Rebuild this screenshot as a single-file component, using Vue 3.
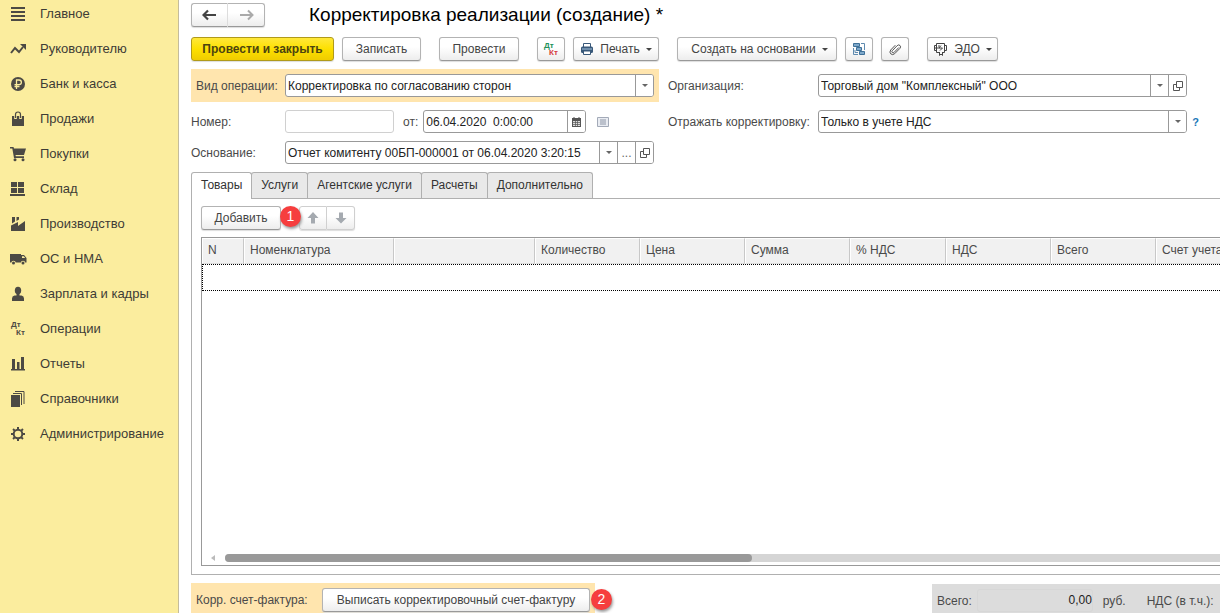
<script setup>
import { ref } from 'vue'

const sections = [
  { id: 'main', label: 'Главное' },
  { id: 'manager', label: 'Руководителю' },
  { id: 'bank', label: 'Банк и касса' },
  { id: 'sales', label: 'Продажи' },
  { id: 'purchases', label: 'Покупки' },
  { id: 'stock', label: 'Склад' },
  { id: 'production', label: 'Производство' },
  { id: 'assets', label: 'ОС и НМА' },
  { id: 'salary', label: 'Зарплата и кадры' },
  { id: 'operations', label: 'Операции' },
  { id: 'reports', label: 'Отчеты' },
  { id: 'catalogs', label: 'Справочники' },
  { id: 'admin', label: 'Администрирование' },
]

const tabs = ['Товары', 'Услуги', 'Агентские услуги', 'Расчеты', 'Дополнительно']
const activeTab = ref('Товары')

const columns = [
  { title: 'N', width: 42 },
  { title: 'Номенклатура', width: 150 },
  { title: '', width: 141 },
  { title: 'Количество', width: 105 },
  { title: 'Цена', width: 105 },
  { title: 'Сумма', width: 105 },
  { title: '% НДС', width: 96 },
  { title: 'НДС', width: 105 },
  { title: 'Всего', width: 105 },
  { title: 'Счет учета', width: 150 },
]

const number = ref('')
const date = ref('06.04.2020  0:00:00')
const basis = ref('Отчет комитенту 00БП-000001 от 06.04.2020 3:20:15')
</script>

<template>
  <div class="app">
    <nav class="sidebar" aria-label="Разделы">
      <a v-for="s in sections" :key="s.id" class="section" href="#">
        <svg class="section-icon" width="18" height="18" viewBox="0 0 18 18" aria-hidden="true">
          <path v-if="s.id === 'main'" d="M2 2h14v2H2zM2 6h14v2H2zM2 10h14v2H2zM2 14h14v2H2z" />
          <g v-else-if="s.id === 'manager'">
            <path d="M2 13l4-5 4 4 4-5" fill="none" stroke="#4c4a44" stroke-width="2" />
            <path d="M11 4h6v6z" />
          </g>
          <g v-else-if="s.id === 'bank'">
            <circle cx="9" cy="9" r="7" />
            <path d="M7.500 14V5h2.600a2.200 2.200 0 010 4.600H5.500M5.500 11.500h5" fill="none" stroke="#fbed9e" stroke-width="1.300" />
          </g>
          <g v-else-if="s.id === 'sales'">
            <path d="M3 6h12v10H3z" />
            <path d="M6.500 9V4.500q0-2.500 2.500-2.500t2.500 2.500V9" fill="none" stroke="#fbed9e" stroke-width="2.600" />
            <path d="M6.500 8V4.500q0-2.500 2.500-2.500t2.500 2.500V8" fill="none" stroke="#4c4a44" stroke-width="1.200" />
          </g>
          <g v-else-if="s.id === 'purchases'">
            <path d="M1 2h3.500l.5 1.500h12L15 10H6.500l.3 1.300H15V13H5L3.300 3.500H1z" />
            <circle cx="6" cy="14.800" r="1.500" /><circle cx="14" cy="14.800" r="1.500" />
          </g>
          <path v-else-if="s.id === 'stock'" d="M2 2h6v5H2zM9 2h6v5H9zM2 8h6v5H2zM9 8h6v5H9zM1 14h15v2H1z" />
          <path v-else-if="s.id === 'production'" d="M2 16v-5.500L9 7v4l7-5V16zM3 2h3v4.500L3 8.500zM7.500 2H10v2.500L7.500 6z" />
          <g v-else-if="s.id === 'assets'">
            <path d="M1 4h11v8.500H1zM12 5h3l2.500 3v4.500H12z" />
            <path d="M13 6.200h1.800L16.200 8H13z" fill="#fbed9e" />
            <circle cx="4.500" cy="13" r="2.200" fill="#fbed9e" /><circle cx="14" cy="13" r="2.200" fill="#fbed9e" />
            <circle cx="4.500" cy="13" r="1.500" /><circle cx="14" cy="13" r="1.500" />
          </g>
          <g v-else-if="s.id === 'salary'">
            <ellipse cx="9" cy="5.500" rx="3.200" ry="3.800" />
            <path d="M7.500 8h3v2.500h2q2.500.3 2.500 3V16H3v-2.500q0-2.700 2.500-3h2z" />
          </g>
          <g v-else-if="s.id === 'operations'" class="dtkt">
            <text x="2" y="7">Дт</text>
            <text x="7" y="15">Кт</text>
          </g>
          <path v-else-if="s.id === 'reports'" d="M3 4h3v10H3zM8 7h2.500v7H8zM12 2h3v12h-3zM2 14h14v1.500H2z" />
          <g v-else-if="s.id === 'catalogs'">
            <path d="M2 5h9v12H2z" />
            <path d="M4 3.500h8.500V15M6 1.500h9V14" fill="none" stroke="#4c4a44" />
          </g>
          <g v-else fill="none" stroke="#4c4a44">
            <circle cx="9" cy="9" r="4.300" stroke-width="2" />
            <path d="M9 2v2.500M9 13.500V16M2 9h2.500M13.500 9H16M4.050 4.050l1.800 1.800M12.150 12.150l1.800 1.800M4.050 13.950l1.800-1.800M12.150 5.850l1.800-1.800" stroke-width="2" />
          </g>
        </svg>
        <span>{{ s.label }}</span>
      </a>
    </nav>

    <main class="document">
      <header class="title-bar">
        <div class="pair">
          <button class="btn history" type="button" aria-label="Назад">
            <svg width="15" height="12" viewBox="0 0 15 12"><path d="M1 6h13M6 1.500L1.500 6 6 10.500" fill="none" stroke="#444" stroke-width="2.200" /></svg>
          </button>
          <button class="btn history" type="button" aria-label="Вперед">
            <svg width="15" height="12" viewBox="0 0 15 12"><path d="M1 6h13M9 1.500L13.500 6 9 10.500" fill="none" stroke="#aaa" stroke-width="2" /></svg>
          </button>
        </div>
        <h1>Корректировка реализации (создание) *</h1>
      </header>

      <div class="toolbar">
        <div class="group">
          <button class="btn primary" type="button">Провести и закрыть</button>
          <button class="btn save" type="button">Записать</button>
        </div>
        <button class="btn post" type="button">Провести</button>
        <div class="group">
          <button class="btn square" type="button" aria-label="Проводки">
            <svg class="dtkt" width="18" height="18" viewBox="0 0 18 18">
              <text x="2" y="8" fill="#21905a">Дт</text>
              <text x="7" y="15" fill="#d43c3c">Кт</text>
            </svg>
          </button>
          <button class="btn print" type="button">
            <svg width="14" height="14" viewBox="0 0 14 14">
              <path d="M3.500 5V1.500h7V5" fill="#fff" stroke="#39597a" />
              <rect x="1" y="4.500" width="12" height="6.500" rx="1.500" fill="#39597a" />
              <path d="M2 7h10" stroke="#a9c7e0" />
              <path d="M3.500 9h7v3.500h-7z" fill="#fff" stroke="#39597a" />
            </svg>
            <span>Печать</span><i class="caret"></i>
          </button>
        </div>
        <div class="group">
          <button class="btn create" type="button"><span>Создать на основании</span><i class="caret"></i></button>
          <button class="btn square" type="button" aria-label="Структура подчиненности">
            <svg width="14" height="14" viewBox="0 0 14 14">
              <g fill="#7fa9cb" stroke="#3f7199">
                <path d="M1.500 1.500h6v3h-6zM4.500 5.500h5v3h-5zM7.500 9.500h5v3h-5z" />
              </g>
              <path d="M9 1.500h3.500V8M1.500 6v6.500H6M3 8v2.500h3" fill="none" stroke="#5f8bb0" />
            </svg>
          </button>
          <button class="btn square" type="button" aria-label="Присоединенные файлы">
            <svg width="14" height="14" viewBox="0 0 14 14"><path d="M10.800 5.500l-4.600 4.800q-1 1-1.900.2t0-1.800l4.800-5q1.600-1.500 2.900-.2t-.1 2.900l-5.200 5.300q-2.100 1.800-3.900.2T2.700 8l4.600-4.800" fill="none" stroke="#555" /></svg>
          </button>
        </div>
        <button class="btn edo" type="button">
          <svg width="15" height="14" viewBox="0 0 15 14">
            <g fill="none" stroke="#444">
              <path d="M3.500 3V1.500h8V3M3.500 9v1.500H6M9 10.500h2.500V9M4 3.500H1.500v5H4M3.500 4v4.500M1.500 6h5M11 3.500h2.500v5H11M11.500 3v6M5 4h2M8 3.500L6 6h3.500L7 8.500" />
              <path d="M6.500 10v3.500L8 12l1.500 1.500V10" />
            </g>
          </svg>
          <span>ЭДО</span><i class="caret"></i>
        </button>
      </div>

      <form class="fields" @submit.prevent>
        <div class="row highlight">
          <label class="cap" for="kind">Вид операции:</label>
          <div class="control grow">
            <select id="kind"><option>Корректировка по согласованию сторон</option></select>
            <span class="cell" aria-hidden="true"><i class="caret small"></i></span>
          </div>
        </div>
        <div class="row right">
          <label class="cap" for="org">Организация:</label>
          <div class="control grow">
            <select id="org"><option>Торговый дом "Комплексный" ООО</option></select>
            <span class="cell" aria-hidden="true"><i class="caret small"></i></span>
            <button class="cell" type="button" aria-label="Открыть организацию">
              <svg width="10" height="10" viewBox="0 0 10 10"><path d="M3.500.5h6v6h-6zM3.500 3.500h-3v6h6v-3" fill="none" stroke="#555" /></svg>
            </button>
          </div>
        </div>
        <div class="row">
          <label class="cap" for="number">Номер:</label>
          <div class="control number"><input id="number" v-model="number" type="text" /></div>
          <label class="from" for="date">от:</label>
          <div class="control date">
            <input id="date" v-model="date" type="text" />
            <button class="cell" type="button" aria-label="Выбрать дату">
              <svg width="9" height="10" viewBox="0 0 9 10"><path d="M0 1h9v9H0z" fill="#555" /><path d="M2 0v2M7 0v2" stroke="#555" /><path d="M1 4h7v5H1z" fill="#ddd" /><path d="M1 5.500h7M1 7.500h7M3.500 4v5M5.500 4v5" stroke="#555" stroke-width=".7" /></svg>
            </button>
          </div>
          <svg class="list-mark" width="12" height="10" viewBox="0 0 12 10" aria-hidden="true"><path d="M.5.5h11v9H.5z" fill="#e9ecf2" stroke="#a3aab8" /><path d="M3 3h6M3 5h6M3 7h6" stroke="#8e96a6" /></svg>
        </div>
        <div class="row right">
          <label class="cap" for="reflect">Отражать корректировку:</label>
          <div class="control grow">
            <select id="reflect"><option>Только в учете НДС</option></select>
            <span class="cell" aria-hidden="true"><i class="caret small"></i></span>
          </div>
          <a class="help" href="#" aria-label="Справка">?</a>
        </div>
        <div class="row base">
          <label class="cap" for="basis">Основание:</label>
          <div class="control grow">
            <input id="basis" v-model="basis" type="text" />
            <button class="cell" type="button" aria-label="Список"><i class="caret small"></i></button>
            <button class="cell" type="button" aria-label="Выбрать">...</button>
            <button class="cell" type="button" aria-label="Открыть основание">
              <svg width="10" height="10" viewBox="0 0 10 10"><path d="M3.500.5h6v6h-6zM3.500 3.500h-3v6h6v-3" fill="none" stroke="#555" /></svg>
            </button>
          </div>
        </div>
      </form>

      <div class="tabs" role="tablist">
        <button
          v-for="t in tabs"
          :key="t"
          class="tab"
          :class="{ active: t === activeTab }"
          type="button"
          role="tab"
          :aria-selected="t === activeTab"
          @click="activeTab = t"
        >{{ t }}</button>
      </div>

      <section class="panel">
        <div class="commands">
          <div class="marked">
            <button class="btn add" type="button">Добавить</button>
            <span class="badge">1</span>
          </div>
          <div class="pair">
            <button class="btn move" type="button" disabled aria-label="Вверх">
              <svg width="12" height="12" viewBox="0 0 12 12"><path d="M6 0l5.500 6H8v5.500H4V6H.5z" fill="#a5aab0" /></svg>
            </button>
            <button class="btn move" type="button" disabled aria-label="Вниз">
              <svg width="12" height="12" viewBox="0 0 12 12"><path d="M6 11.500L11.500 6H8V.5H4V6H.5z" fill="#a5aab0" /></svg>
            </button>
          </div>
        </div>
        <div class="grid">
          <div class="grid-view">
            <table>
              <colgroup>
                <col v-for="(c, i) in columns" :key="i" :style="{ width: c.width + 'px' }" />
              </colgroup>
              <thead>
                <tr><th v-for="(c, i) in columns" :key="i" scope="col">{{ c.title }}</th></tr>
              </thead>
              <tbody>
                <tr><td :colspan="columns.length"></td></tr>
              </tbody>
            </table>
          </div>
          <div class="scroll">
            <i class="scroll-arrow"></i>
            <div class="track"><div class="thumb"></div></div>
          </div>
        </div>
      </section>

      <footer class="summary">
        <div class="invoice">
          <span class="invoice-cap">Корр. счет-фактура:</span>
          <div class="marked">
            <button class="btn issue" type="button">Выписать корректировочный счет-фактуру</button>
            <span class="badge">2</span>
          </div>
        </div>
        <div class="totals">
          <span>Всего:</span>
          <output class="sum">0,00</output>
          <span class="currency">руб.</span>
          <span class="vat">НДС (в т.ч.):</span>
        </div>
      </footer>
    </main>
  </div>
</template>

<style>
body {
  margin: 0;
  background: #fff;
}
</style>

<style scoped>
.app {
  display: flex;
  height: 100vh;
  overflow: hidden;
  font-family: "Liberation Sans", Arial, sans-serif;
  font-size: 12px;
  color: #4a4a4a;
}
.app * {
  box-sizing: border-box;
}
button,
input,
select {
  font: inherit;
  color: inherit;
  margin: 0;
}
.sidebar {
  flex: 0 0 179px;
  display: flex;
  flex-direction: column;
  gap: 8px;
  background: #fbed9e;
  border-right: 1px solid #c4bc9c;
}
.section {
  display: flex;
  align-items: center;
  gap: 13px;
  height: 27px;
  padding-left: 9px;
  font-size: 13px;
  color: #3e3c36;
  text-decoration: none;
  white-space: nowrap;
}
.section-icon {
  fill: #4c4a44;
}
.dtkt {
  font-size: 8px;
  font-weight: bold;
}
.document {
  flex: 1;
  min-width: 0;
  display: flex;
  flex-direction: column;
  padding: 3px 0 0 12px;
}
.title-bar {
  display: flex;
  align-items: center;
  gap: 44px;
}
h1 {
  margin: 0;
  font-size: 19px;
  font-weight: normal;
  line-height: 24px;
  color: #000;
  white-space: nowrap;
}
.btn {
  display: flex;
  align-items: center;
  justify-content: center;
  height: 24px;
  padding: 0;
  border: 1px solid #b3b3b3;
  border-bottom-color: #999;
  border-radius: 3px;
  background: linear-gradient(#fff 40%, #ededed);
  box-shadow: 0 1px 1px #ddd;
  color: #444;
  white-space: nowrap;
}
.pair {
  display: flex;
}
.pair .btn:first-child {
  border-radius: 3px 0 0 3px;
}
.pair .btn:last-child {
  border-left: 0;
  border-radius: 0 3px 3px 0;
}
.history {
  width: 37px;
}
.history:first-child {
  border-right-color: #ddd;
}
.toolbar {
  display: flex;
  gap: 18px;
  margin-top: 10px;
}
.group {
  display: flex;
  gap: 8px;
}
.primary {
  width: 143px;
  border-color: #b09a1a;
  background: linear-gradient(#ffe83a, #fde000 50%, #efcc00);
  font-weight: bold;
  color: #4c4410;
}
.save {
  width: 79px;
}
.post {
  width: 80px;
}
.square {
  width: 28px;
}
.print {
  width: 86px;
  gap: 6px;
}
.create {
  width: 160px;
  padding-left: 5px;
  gap: 6px;
}
.edo {
  width: 71px;
  gap: 6px;
}
.caret {
  border: 3px solid transparent;
  border-top-color: #444;
  border-bottom: 0;
}
.small {
  border-top-color: #666;
}
.fields {
  display: grid;
  grid-template-columns: 468px minmax(0, 1fr);
  gap: 8px 9px;
  margin-top: 8px;
}
.row {
  display: flex;
  align-items: center;
}
.cap {
  flex: 0 0 94px;
  white-space: nowrap;
}
.highlight {
  padding: 5px;
  background: #ffe5ae;
}
.highlight .cap {
  flex-basis: 89px;
}
.right {
  padding-right: 33px;
  position: relative;
}
.right .cap {
  flex-basis: 150px;
}
.base {
  padding-right: 5px;
}
.control {
  display: flex;
  height: 23px;
  border: 1px solid #999;
  border-radius: 3px;
  background: #fff;
  overflow: hidden;
  color: #222;
}
.grow {
  flex: 1;
  min-width: 0;
}
.control input,
.control select {
  flex: 1;
  min-width: 0;
  padding: 0 2px;
  border: 0;
  outline: 0;
  background: none;
  appearance: none;
  white-space: pre;
}
.number {
  width: 109px;
  border-color: #d0d0d0;
}
.from {
  margin: 0 5px 0 9px;
}
.date {
  width: 163px;
}
.list-mark {
  margin-left: 11px;
}
.cell {
  flex: 0 0 18px;
  display: flex;
  align-items: center;
  justify-content: center;
  padding: 0;
  border: 0;
  border-left: 1px solid #999;
  background: #fff;
  color: #666;
}
.help {
  position: absolute;
  right: 21px;
  color: #1a77b8;
  font-size: 11px;
  font-weight: bold;
  text-decoration: none;
}
.tabs {
  display: flex;
  margin-top: 8px;
}
.tab {
  height: 26px;
  margin-right: -1px;
  padding: 0 9px 2px;
  border: 1px solid #b0b0b0;
  border-bottom: 0;
  border-radius: 3px 3px 0 0;
  background: #e9e9e9;
  color: #333;
  white-space: nowrap;
}
.tab.active {
  z-index: 1;
  height: 27px;
  margin-bottom: -1px;
  padding-bottom: 3px;
  background: #fff;
}
.panel {
  flex: 1;
  min-height: 0;
  display: flex;
  flex-direction: column;
  gap: 7px;
  padding: 7px 0 8px 9px;
  border: 1px solid #b0b0b0;
  border-right: 0;
}
.commands {
  display: flex;
  gap: 18px;
}
.marked {
  position: relative;
}
.add {
  width: 80px;
}
.badge {
  position: absolute;
  top: 0;
  right: -20px;
  width: 21px;
  height: 21px;
  border-radius: 50%;
  background: #f63e3e;
  box-shadow: 1px 2px 3px #999;
  color: #fff;
  font-size: 14px;
  line-height: 21px;
  text-align: center;
}
.move {
  width: 28px;
  border-color: #cfcfcf;
}
.grid {
  flex: 1;
  min-height: 0;
  display: flex;
  flex-direction: column;
  border: 1px solid #999;
  border-right: 0;
}
.grid-view {
  flex: 1;
  min-height: 0;
  overflow: hidden;
}
table {
  width: 1104px;
  table-layout: fixed;
  border-collapse: separate;
  border-spacing: 0;
}
th {
  height: 26px;
  padding: 0 5px 2px;
  border: 1px solid #fff;
  border-right-color: #c8c8c8;
  border-bottom-color: #ddd;
  background: #f1f1f1;
  font-weight: normal;
  text-align: left;
  white-space: nowrap;
}
td {
  height: 27px;
  padding: 0;
  border: 1px dotted #000;
}
.scroll {
  display: flex;
  align-items: center;
  gap: 10px;
  height: 14px;
  padding-left: 9px;
}
.scroll-arrow {
  border: 3px solid transparent;
  border-left: 0;
  border-right: 4px solid #bbb;
}
.track {
  flex: 1;
  height: 8px;
  border-radius: 4px 0 0 4px;
  background: #d5d5d5;
}
.thumb {
  width: 53%;
  height: 8px;
  border-radius: 4px;
  background: #999;
}
.summary {
  flex: 0 0 30px;
  display: flex;
  justify-content: space-between;
  align-items: flex-start;
  margin-top: 8px;
  white-space: nowrap;
}
.invoice {
  display: flex;
  align-items: center;
  padding: 5px 5px 1px;
  background: #ffe5ae;
}
.invoice-cap {
  width: 126px;
}
.issue {
  width: 268px;
}
.invoice .badge {
  top: 1px;
  right: -22px;
}
.totals {
  display: flex;
  align-items: center;
  width: 288px;
  height: 29px;
  margin-top: 1px;
  padding: 4px 0 0 5px;
  background: #dcdcdc;
}
.sum {
  width: 116px;
  height: 23px;
  margin-left: 5px;
  border: 1px solid #d7d7d7;
  border-radius: 3px;
  line-height: 21px;
  text-align: right;
  color: #222;
}
.currency {
  margin-left: 10px;
}
.vat {
  margin-left: 21px;
}
</style>
